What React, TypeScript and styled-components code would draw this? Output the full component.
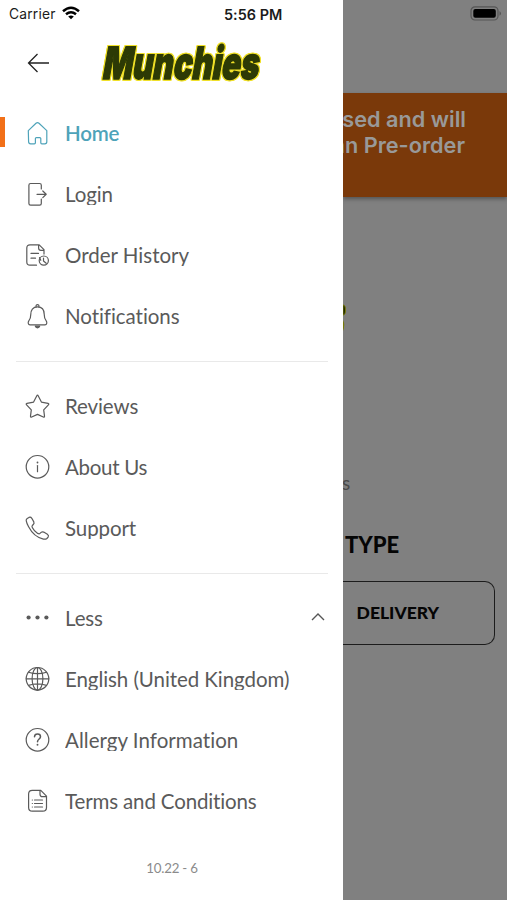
import React from "react";
import styled, { createGlobalStyle, css } from "styled-components";

const GlobalStyle = createGlobalStyle`
  * { box-sizing: border-box; }
  body { margin: 0; background: #fff; font-family: Lato, sans-serif; }
`;

const Screen = styled.div`
  display: grid;
  grid-template-columns: 343px 164px;
  width: 507px;
  height: 900px;
  overflow: hidden;
`;

const Drawer = styled.nav`
  display: flex;
  flex-direction: column;
  background: #fff;
  color: #5a5a5a;
`;

const StatusBar = styled.div`
  display: flex;
  align-items: center;
  height: 28px;
  padding-left: 9px;
  font-family: Inter, sans-serif;
  color: #1b1b1b;
`;

const Carrier = styled.span`
  width: 47px;
  letter-spacing: 0.2px;
  font-size: 13.8px;
`;

const WifiIcon = styled.svg`
  margin-left: 6px;
  margin-top: -2px;
`;

const Clock = styled.span`
  margin-left: 144px;
  font-size: 14.4px;
  font-weight: 600;
  letter-spacing: 0.05px;
  white-space: nowrap;
`;

const Header = styled.header`
  display: flex;
  align-items: center;
  height: 74px;
  padding: 0 0 4px 27px;
`;

const LogoArt = styled.svg`
  margin-left: 48px;
  overflow: visible;
  filter: drop-shadow(1px 0 0 #f0e028) drop-shadow(-1px 0 0 #f0e028)
    drop-shadow(0 1px 0 #f0e028) drop-shadow(0 -1px 0 #f0e028);
`;

const LogoText = styled.text`
  font-family: Inter, sans-serif;
  font-weight: 900;
  fill: #2d3a05;
  stroke: #2d3a05;
`;

const Group = styled.div`
  display: flex;
  flex-direction: column;
`;

const Row = styled.div<{ $active?: boolean }>`
  display: flex;
  align-items: center;
  height: 61px;
  padding: 0 18px 0 20px;
  ${(p) =>
    p.$active &&
    css`
      color: #4ea3b9;
      background: linear-gradient(#f27018, #f27018) 0 15px / 5px 30px no-repeat;
    `}
`;

const IconSlot = styled.svg`
  flex: none;
  width: 36px;
  height: 30px;
  margin-right: 9px;
  fill: none;
  stroke: currentColor;
  stroke-width: 1.2;
  stroke-linecap: round;
  stroke-linejoin: round;
`;

const Label = styled.span<{ $strong?: boolean; $spacing?: number }>`
  flex: 1;
  line-height: 26px;
  clip-path: inset(0 0 1.5px 0);
  white-space: nowrap;
  font-size: 20.5px;
  font-weight: ${(p) => (p.$strong ? 600 : 400)};
  font-variant-ligatures: none;
  letter-spacing: ${(p) => p.$spacing ?? 0}px;
`;

const Divider = styled.div`
  height: 1px;
  margin: 14.5px 15px 13.5px 16px;
  background: #e9e9e9;
`;

const Chevron = styled.svg`
  fill: none;
  stroke: #555;
  stroke-width: 1.4;
  margin-top: -1px;
`;

const Version = styled.div`
  margin-top: 28px;
  padding-left: 1px;
  text-align: center;
  font-size: 13.3px;
  letter-spacing: -0.2px;
  line-height: 18px;
  color: #8b8b8b;
`;

const Backdrop = styled.main`
  display: flex;
  flex-direction: column;
  min-width: 0;
  background: #808080;
  overflow: hidden;
`;

const BatteryBar = styled.div`
  display: flex;
  align-items: center;
  justify-content: flex-end;
  height: 93px;
  padding: 0 5px 66px 0;
`;

const Notice = styled.section`
  height: 104px;
  padding: 13px 41px 0 0;
  display: flex;
  flex-direction: column;
  align-items: flex-end;
  background: #7a390a;
  color: #999;
  font-family: Inter, sans-serif;
  font-size: 21.7px;
  font-weight: 600;
  line-height: 26px;
  white-space: nowrap;
  box-shadow: 0 2px 4px rgba(0, 0, 0, 0.35);
`;

const NoticeLine = styled.span<{ $inset?: number }>`
  margin-right: ${(p) => p.$inset ?? 0}px;
`;

const LogoEdge = styled.svg`
  margin-top: 104px;
`;

const Caption = styled.div`
  margin: 137px 0 0 -1px;
  font-size: 19px;
  line-height: 22px;
  color: #4a4a4a;
`;

const Heading = styled.h2`
  margin: 37px 0 0 2px;
  font-size: 22px;
  line-height: 28px;
  font-weight: 900;
  color: #050505;
`;

const DeliveryButton = styled.button`
  width: 152px;
  height: 64px;
  margin-top: 22px;
  padding: 0 55px 1px 0;
  border: 1.5px solid #1c1c1c;
  border-left: 0;
  border-radius: 0 10px 10px 0;
  background: transparent;
  color: #050505;
  font-family: Lato, sans-serif;
  font-size: 17.5px;
  font-weight: 900;
  text-align: right;
  white-space: nowrap;
`;

const icons: Record<string, React.ReactNode> = {
  home: <path d="M8.3 12.6 16 5.3q1.5-1.2 3 0l7.8 7.3v11.2q0 2-2 2h-3q-1 0-1-1v-4.2q0-1-1-1h-3.4q-1 0-1 1v4.2q0 1-1 1h-3.8q-2 0-2-2z" />,
  login: (
    <>
      <path d="M21.3 10V6.2q0-1.7-1.7-1.7h-9q-1.7 0-1.7 1.7v18.3q0 1.7 1.7 1.7h9q1.7 0 1.7-1.7V20" />
      <path d="M17 15.3h9M22.8 12l3.4 3.3-3.4 3.3" />
    </>
  ),
  history: (
    <>
      <path d="M16.5 25.2H10q-3.2 0-3.2-3.2V8q0-3.2 3.2-3.2h9.2l4.8 4.8v4.5M18.6 5v3.1q0 2.3 2.3 2.3H24M11 13.4h7.5M11 18.2h4.5" />
      <circle cx="23.8" cy="20.6" r="4.6" />
      <path d="m19.5 17.5 1.3 2.8M23.5 18v3l2.7 2.3" />
    </>
  ),
  bell: (
    <>
      <path d="M17.5 5.8c-4.8 0-6.7 3.5-6.7 7.4 0 3.9-.7 5.1-2 6.7-1.1 1.5-.7 4 1.2 4h15c1.9 0 2.3-2.5 1.2-4-1.3-1.6-2-2.8-2-6.7 0-3.9-1.9-7.4-6.7-7.4z" />
      <path d="M16.1 5.9c-.7-3 3.5-3 2.8 0" />
      <path d="M15.3 25.2h4.4q-.5 1.7-2.2 1.7t-2.2-1.7z" fill="currentColor" />
    </>
  ),
  star: <path d="M16.7 5q.8-1.6 1.6 0l3.1 6.1 6.6 1.2q1.4.4.4 1.5l-4.7 5.1.8 6.2q.1 1.5-1.2.9l-5.8-2.6-5.8 2.6q-1.3.6-1.2-.9l.8-6.2-4.7-5.1q-1-1.1.4-1.5l6.6-1.2z" />,
  info: (
    <>
      <circle cx="17.5" cy="14.8" r="11.3" />
      <path d="M17.5 13.5v6.2" />
      <circle cx="17.5" cy="10.5" r=".9" fill="currentColor" stroke="none" />
    </>
  ),
  phone: <path d="M7.2 5.4 9 4.4q1.7-.7 2.8.9l2 3.6q.7 1.5-.5 2.6l-1 1q-.6.8 0 2 1.7 3.6 5.4 5.9 1.5.8 2.3 0l1.1-1q1.2-1 2.6-.3l3.7 2.2q1.7 1.2.7 2.8l-1.2 1.4q-1.3 1-3.5.6Q14 24.1 8.6 13.8 6.6 10 6.2 7.6q-.2-1.4 1-2.2z" />,
  dots: (
    <g fill="currentColor" stroke="none">
      <circle cx="8.6" cy="14.5" r="2.1" />
      <circle cx="17.5" cy="14.5" r="2.1" />
      <circle cx="26.4" cy="14.5" r="2.1" />
    </g>
  ),
  globe: (
    <>
      <circle cx="17.5" cy="14.8" r="11.3" />
      <ellipse cx="17.5" cy="14.8" rx="5.4" ry="11.3" />
      <path d="M17.5 3.5v22.6M6.2 14.8h22.6M8.5 8.2q9 3 18 0M8.5 21.4q9-3 18 0" />
    </>
  ),
  help: (
    <>
      <circle cx="17.5" cy="14.8" r="11.3" />
      <path d="M14.5 11.8c.2-3.6 6-3.6 6 0 0 2.2-3 2.3-3 5" strokeWidth="1.5" />
      <circle cx="17.5" cy="19.8" r=".95" fill="currentColor" stroke="none" />
    </>
  ),
  terms: (
    <>
      <path d="M20.8 4.4h-8.5q-3.7 0-3.7 3.7v13.4q0 3.7 3.7 3.7h10.5q3.7 0 3.7-3.7V10.1zM20 4.7v3.5q0 2.5 2.5 2.5h3.8" />
      <path d="M14.5 14h8M14.5 17.5h8M14.5 21h8M12.3 14h.1M12.3 17.5h.1M12.3 21h.1" />
    </>
  ),
};

type Item = { icon: string; text: string; active?: boolean; expanded?: boolean; spacing?: number };

const groups: Item[][] = [
  [
    { icon: "home", text: "Home", active: true, spacing: -0.2 },
    { icon: "login", text: "Login", spacing: -0.1 },
    { icon: "history", text: "Order History" },
    { icon: "bell", text: "Notifications", spacing: -0.05 },
  ],
  [
    { icon: "star", text: "Reviews", spacing: -0.1 },
    { icon: "info", text: "About Us", spacing: -0.3 },
    { icon: "phone", text: "Support", spacing: -0.1 },
  ],
  [
    { icon: "dots", text: "Less", expanded: true, spacing: -0.15 },
    { icon: "globe", text: "English (United Kingdom)", spacing: -0.07 },
    { icon: "help", text: "Allergy Information", spacing: 0.04 },
    { icon: "terms", text: "Terms and Conditions", spacing: -0.14 },
  ],
];

function MenuRow({ icon, text, active, expanded, spacing }: Item) {
  return (
    <Row $active={active}>
      <IconSlot viewBox="0 0 36 30">{icons[icon]}</IconSlot>
      <Label $strong={active} $spacing={spacing}>{text}</Label>
      {expanded && (
        <Chevron width="14" height="10" viewBox="0 0 14 10">
          <path d="m1 8 6-6 6 6" />
        </Chevron>
      )}
    </Row>
  );
}

export default function App() {
  return (
    <>
      <GlobalStyle />
      <Screen>
        <Drawer>
          <StatusBar>
            <Carrier>Carrier</Carrier>
            <WifiIcon width="18" height="14" viewBox="0 0 18 14" fill="none" stroke="#000" strokeWidth="2.5">
              <path d="M1 5.2q8-7 16 0M4 8.3q5-4.2 10 0" />
              <path d="m9 13.3-2.8-2.8q2.8-2 5.6 0z" fill="#000" stroke="none" />
            </WifiIcon>
            <Clock>5:56 PM</Clock>
          </StatusBar>
          <Header>
            <svg width="23" height="20" viewBox="0 0 23 20" fill="none" stroke="#222" strokeWidth="1.3">
              <path d="M22 10H1.5M10.5 1 1.5 10l9 9" />
            </svg>
            <LogoArt width="166" height="40" viewBox="0 0 166 40">
              <LogoText
                transform="translate(3.5 36) skewX(-10)"
                fontSize="44.5"
                strokeWidth="1.5"
                textLength="156"
                lengthAdjust="spacingAndGlyphs"
              >
                Munchies
              </LogoText>
            </LogoArt>
          </Header>
          {groups.map((items, index) => (
            <React.Fragment key={index}>
              {index > 0 && <Divider />}
              <Group>
                {items.map((item) => (
                  <MenuRow key={item.text} {...item} />
                ))}
              </Group>
            </React.Fragment>
          ))}
          <Version>10.22 - 6</Version>
        </Drawer>
        <Backdrop>
          <BatteryBar>
            <svg width="32" height="15" viewBox="0 0 32 15">
              <rect x="1" y=".8" width="27" height="13.2" rx="4" fill="none" stroke="#555" strokeWidth="1.2" />
              <rect x="3.3" y="3" width="22.5" height="8.8" rx="2" fill="#000" />
              <path d="M29.5 5q3 2.4 0 4.8z" fill="#555" />
            </svg>
          </BatteryBar>
          <Notice>
            <NoticeLine>osed and will</NoticeLine>
            <NoticeLine $inset={1}>an Pre-order</NoticeLine>
          </Notice>
          <LogoEdge width="4" height="34" viewBox="0 0 4 34">
            <path d="M0 4q2.500 0 2.500 5T0 14z" fill="#1d2500" stroke="#777a08" />
            <path d="M0 19q2.500 5 0 11z" fill="#777a08" />
          </LogoEdge>
          <Caption>s</Caption>
          <Heading>TYPE</Heading>
          <DeliveryButton>DELIVERY</DeliveryButton>
        </Backdrop>
      </Screen>
    </>
  );
}
